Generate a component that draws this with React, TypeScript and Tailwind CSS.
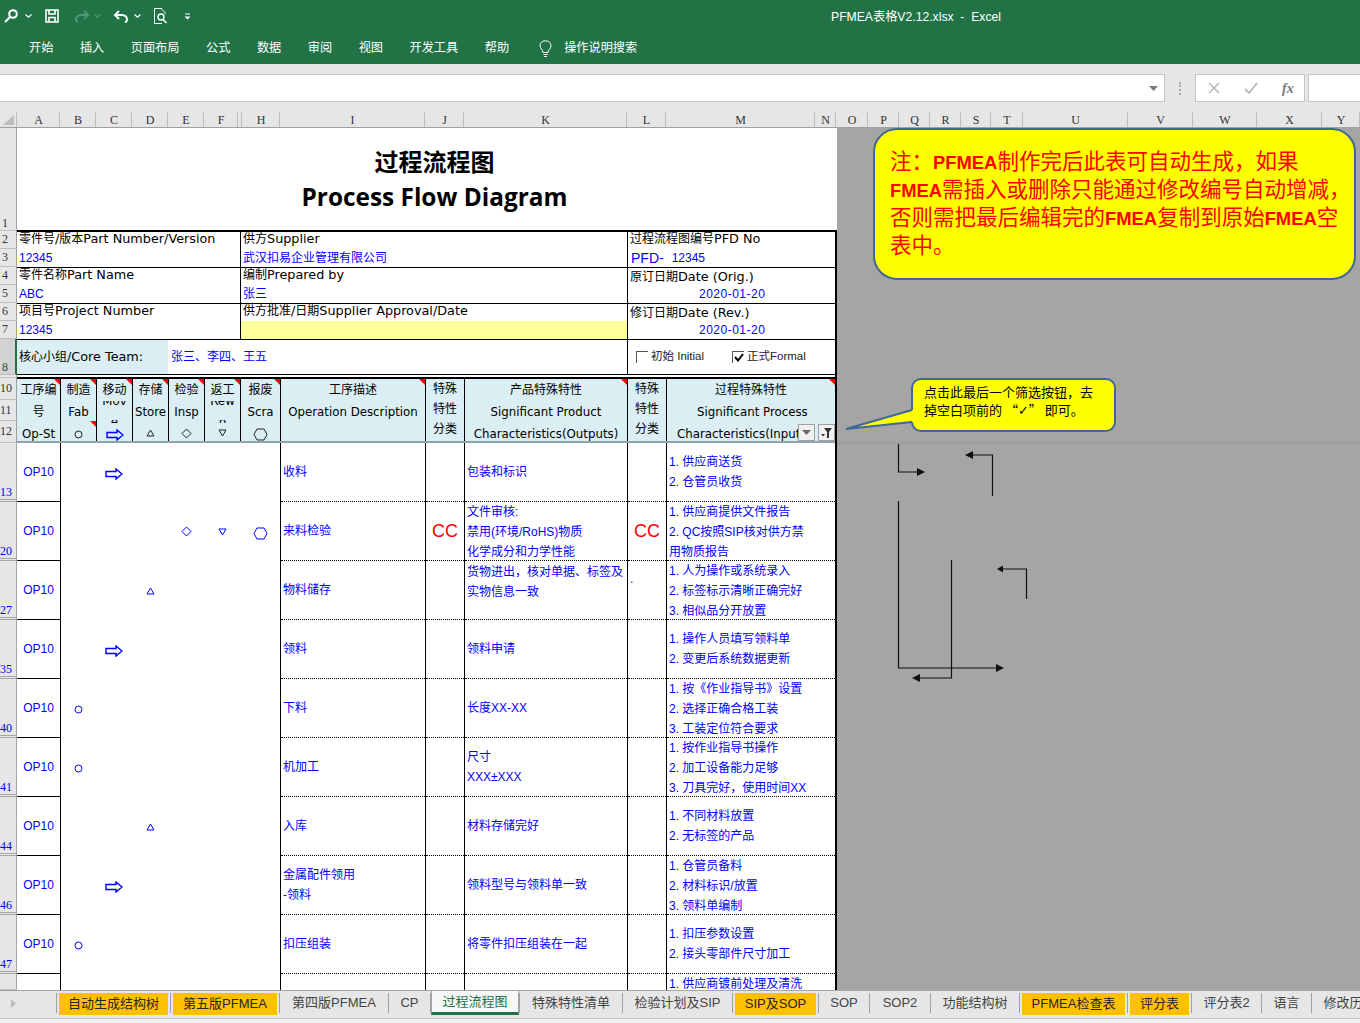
import React from 'react';

const sans = "font-['DejaVu_Sans','Noto_Sans_CJK_SC',sans-serif] text-[12.8px] text-black";
const head = "font-['DejaVu_Sans','Noto_Sans_CJK_SC',sans-serif] text-[11.8px] text-black";
const blueFont = "font-['Liberation_Sans','Noto_Sans_CJK_SC',sans-serif] text-[12px] text-[#0000ff]";
const blue = `${blueFont} leading-[20px]`;
const cols = 'grid grid-cols-[43px_36px_36px_36px_36px_36px_40px_145px_39px_163px_39px_169px]';

// CJK glyphs are a touch smaller than the latin ones in these cells
function Mix({ text }: { text: string }) {
  return (
    <>
      {text.split(/([\u3000-\u9fff\uff00-\uffef]+)/).map((part, i) =>
        i % 2 ? (
          <span key={i} className="text-[12px]">
            {part}
          </span>
        ) : (
          part
        )
      )}
    </>
  );
}

function Mark({ type, color = '#0000ff' }: { type?: string; color?: string }) {
  if (type === 'arrow')
    return (
      <svg width="18" height="12" viewBox="0 0 18 12" className="mt-[3px]" fill="none" stroke={color} strokeWidth="1.4">
        <path d="M1 3.5H11V1L17 6L11 11V8.5H1Z" />
      </svg>
    );
  if (type === 'circle')
    return (
      <svg width="9" height="9" viewBox="0 0 9 9" className="mt-[2px]" fill="none" stroke={color}>
        <circle cx="4.5" cy="4.5" r="3.5" />
      </svg>
    );
  if (type === 'up')
    return (
      <svg width="9" height="8" viewBox="0 0 9 8" fill="none" stroke={color}>
        <path d="M4.5 1L8 7H1Z" />
      </svg>
    );
  if (type === 'down')
    return (
      <svg width="9" height="8" viewBox="0 0 9 8" fill="none" stroke={color}>
        <path d="M1 1H8L4.5 7Z" />
      </svg>
    );
  if (type === 'diamond')
    return (
      <svg width="11" height="11" viewBox="0 0 11 11" fill="none" stroke={color}>
        <path d="M5.5 1L10 5.5L5.5 10L1 5.5Z" />
      </svg>
    );
  if (type === 'hex')
    return (
      <svg width="15" height="13" viewBox="0 0 15 13" className="mt-[3px]" fill="none" stroke={color}>
        <path d="M4 1H11L14 6.5L11 12H4L1 6.5Z" />
      </svg>
    );
  return null;
}

function Corner({ className = 'top-0' }: { className?: string }) {
  return (
    <span className={`absolute right-0 h-0 w-0 border-l-[6px] border-t-[6px] border-l-transparent border-t-[#ff0000] ${className}`} />
  );
}

const columns = [
  { label: '', w: 'w-[17px]' },
  { label: 'A', w: 'w-[43px]' },
  { label: 'B', w: 'w-[36px]' },
  { label: 'C', w: 'w-[36px]' },
  { label: 'D', w: 'w-[36px]' },
  { label: 'E', w: 'w-[36px]' },
  { label: 'F', w: 'w-[34px]' },
  { label: '', w: 'w-[4px]' },
  { label: 'H', w: 'w-[38px]' },
  { label: 'I', w: 'w-[145px]' },
  { label: 'J', w: 'w-[39px]' },
  { label: 'K', w: 'w-[163px]' },
  { label: 'L', w: 'w-[39px]' },
  { label: 'M', w: 'w-[149px]' },
  { label: 'N', w: 'w-[21px]' },
  { label: 'O', w: 'w-[32px]' },
  { label: 'P', w: 'w-[31px]' },
  { label: 'Q', w: 'w-[31px]' },
  { label: 'R', w: 'w-[31px]' },
  { label: 'S', w: 'w-[30px]' },
  { label: 'T', w: 'w-[32px]' },
  { label: 'U', w: 'w-[105px]' },
  { label: 'V', w: 'w-[65px]' },
  { label: 'W', w: 'w-[64px]' },
  { label: 'X', w: 'w-[65px]' },
  { label: 'Y', w: 'w-[38px]' },
];

const rowHeads = [
  { n: '1', h: 'h-[103px]', end: true },
  { n: '2', h: 'h-[18px]' },
  { n: '3', h: 'h-[18px]' },
  { n: '4', h: 'h-[18px]' },
  { n: '5', h: 'h-[18px]' },
  { n: '6', h: 'h-[18px]' },
  { n: '7', h: 'h-[18px]' },
  { n: '8', h: 'h-[36px]', end: true, selected: true },
  { n: '', h: 'h-[3px]' },
  { n: '10', h: 'h-[22px]' },
  { n: '11', h: 'h-[21px]' },
  { n: '12', h: 'h-[22px]' },
  { n: '13', h: 'h-[59px]', end: true, filtered: true },
  { n: '20', h: 'h-[59px]', end: true, filtered: true },
  { n: '27', h: 'h-[59px]', end: true, filtered: true },
  { n: '35', h: 'h-[59px]', end: true, filtered: true },
  { n: '40', h: 'h-[59px]', end: true, filtered: true },
  { n: '41', h: 'h-[59px]', end: true, filtered: true },
  { n: '44', h: 'h-[59px]', end: true, filtered: true },
  { n: '46', h: 'h-[59px]', end: true, filtered: true },
  { n: '47', h: 'h-[59px]', end: true, filtered: true },
  { n: '', h: 'h-[16px]' },
];

const steps = [
  { marks: ['', 'arrow', '', '', '', ''], name: ['收料'], product: ['包装和标识'], cc: false, process: ['1. 供应商送货', '2. 仓管员收货'] },
  {
    marks: ['', '', '', 'diamond', 'down', 'hex'],
    name: ['来料检验'],
    product: ['文件审核:', '禁用(环境/RoHS)物质', '化学成分和力学性能'],
    cc: true,
    process: ['1. 供应商提供文件报告', '2. QC按照SIP核对供方禁', '用物质报告'],
  },
  {
    marks: ['', '', 'up', '', '', ''],
    name: ['物料储存'],
    product: ['货物进出，核对单据、标签及', '实物信息一致'],
    top: true,
    dot: true,
    cc: false,
    process: ['1. 人为操作或系统录入', '2. 标签标示清晰正确完好', '3. 相似品分开放置'],
  },
  { marks: ['', 'arrow', '', '', '', ''], name: ['领料'], product: ['领料申请'], cc: false, process: ['1. 操作人员填写领料单', '2. 变更后系统数据更新'] },
  {
    marks: ['circle', '', '', '', '', ''],
    name: ['下料'],
    product: ['长度XX-XX'],
    cc: false,
    process: ['1. 按《作业指导书》设置', '2. 选择正确合格工装', '3. 工装定位符合要求'],
  },
  {
    marks: ['circle', '', '', '', '', ''],
    name: ['机加工'],
    product: ['尺寸', 'XXX±XXX'],
    cc: false,
    process: ['1. 按作业指导书操作', '2. 加工设备能力足够', '3. 刀具完好，使用时间XX'],
  },
  { marks: ['', '', 'up', '', '', ''], name: ['入库'], product: ['材料存储完好'], cc: false, process: ['1. 不同材料放置', '2. 无标签的产品'] },
  {
    marks: ['', 'arrow', '', '', '', ''],
    name: ['金属配件领用', '-领料'],
    product: ['领料型号与领料单一致'],
    cc: false,
    process: ['1. 仓管员备料', '2. 材料标识/放置', '3. 领料单编制'],
  },
  { marks: ['circle', '', '', '', '', ''], name: ['扣压组装'], product: ['将零件扣压组装在一起'], cc: false, process: ['1. 扣压参数设置', '2. 接头零部件尺寸加工'] },
];

const sheetTabs = [
  { name: '自动生成结构树', w: 'w-[114px]', hot: true },
  { name: '第五版PFMEA', w: 'w-[109px]', hot: true },
  { name: '第四版PFMEA', w: 'w-[109px]' },
  { name: 'CP', w: 'w-[42px]' },
  { name: '过程流程图', w: 'w-[89px]', active: true },
  { name: '特殊特性清单', w: 'w-[103px]' },
  { name: '检验计划及SIP', w: 'w-[110px]' },
  { name: 'SIP及SOP', w: 'w-[86px]', hot: true },
  { name: 'SOP', w: 'w-[51px]' },
  { name: 'SOP2', w: 'w-[61px]' },
  { name: '功能结构树', w: 'w-[89px]' },
  { name: 'PFMEA检查表', w: 'w-[108px]', hot: true },
  { name: '评分表', w: 'w-[64px]', hot: true },
  { name: '评分表2', w: 'w-[70px]' },
  { name: '语言', w: 'w-[50px]' },
  { name: '修改历史', w: 'w-[76px]' },
];

function Chevron({ className = '' }: { className?: string }) {
  return (
    <svg width="7" height="4" viewBox="0 0 7 4" fill="none" stroke="currentColor" strokeWidth="1.2" className={className}>
      <path d="M0.5 0.5L3.5 3.2L6.5 0.5" />
    </svg>
  );
}

function QuickAccess() {
  return (
    <div className="flex w-[831px] shrink-0 items-center pl-[4px] text-white">
      <svg width="14" height="14" viewBox="0 0 14 14" fill="none" stroke="currentColor" strokeWidth="2">
        <circle cx="9" cy="5" r="3.8" />
        <path d="M6 8L1 13" />
      </svg>
      <Chevron className="ml-[7px]" />
      <svg width="14" height="14" viewBox="0 0 14 14" className="ml-[13px]" fill="none" stroke="currentColor" strokeWidth="1.6">
        <path d="M1 1H13V13H1Z" />
        <path d="M4 1V5H10V1M4 13V8.5H10V13" />
      </svg>
      <svg width="16" height="14" viewBox="0 0 16 14" className="ml-[15px] text-[#4f9a72]" fill="none" stroke="currentColor" strokeWidth="2">
        <path d="M10 2L14 6L10 10M14 6H7C4 6 2 8 2 10.5C2 12 3 13 4 13.5" />
      </svg>
      <Chevron className="ml-[4px] text-[#4f9a72]" />
      <svg width="16" height="14" viewBox="0 0 16 14" className="ml-[12px]" fill="none" stroke="currentColor" strokeWidth="2">
        <path d="M6 2L2 6L6 10M2 6H9C12 6 14 8 14 10.5C14 12 13 13 12 13.5" />
      </svg>
      <Chevron className="ml-[5px]" />
      <svg width="15" height="16" viewBox="0 0 15 16" className="ml-[12px]" fill="none" stroke="currentColor">
        <path d="M9 0.5H1.5V15.5H9" />
        <path d="M8 0.5L12 4.5V6" />
        <circle cx="8" cy="9" r="3" strokeWidth="1.4" />
        <path d="M10 11.5L13.5 15" strokeWidth="1.6" />
      </svg>
      <svg width="7" height="7" viewBox="0 0 7 7" className="ml-[16px]" fill="currentColor">
        <path d="M1 0.5H6V1.5H1ZM0.5 3.5H6.5L3.5 6.5Z" />
      </svg>
    </div>
  );
}

function Chrome() {
  const tabs = ['开始', '插入', '页面布局', '公式', '数据', '审阅', '视图', '开发工具', '帮助'];
  return (
    <div className="h-[64px] bg-[#217346] font-['Liberation_Sans','Noto_Sans_CJK_SC',sans-serif] text-[12.2px] text-white">
      <div className="flex h-[32px] items-center">
        <QuickAccess />
        <span className="whitespace-pre pt-[2px]">PFMEA表格V2.12.xlsx  -  Excel</span>
      </div>
      <div className="flex h-[32px] items-center pl-[29px]">
        <div className="flex gap-[26.5px]">
          {tabs.map((t) => (
            <span key={t}>{t}</span>
          ))}
        </div>
        <svg width="13" height="17" viewBox="0 0 13 17" className="ml-[30px]" fill="none" stroke="currentColor">
          <path d="M4 12.5C4 10 1 8.5 1 5.5C1 2.8 3.2 0.8 6.5 0.8C9.8 0.8 12 2.8 12 5.5C12 8.5 9 10 9 12.5Z" />
          <path d="M4.5 14.5H8.5M5 16.5H8" />
        </svg>
        <span className="ml-[12px]">操作说明搜索</span>
      </div>
    </div>
  );
}

function FormulaBar() {
  return (
    <div className="flex h-[39px] items-start bg-[#e6e6e6] pt-[10px]">
      <div className="flex h-[28px] w-[1165px] items-center justify-end border-y border-r border-[#c6c6c6] bg-white pr-[6px]">
        <svg width="9" height="5" viewBox="0 0 9 5" fill="#7a7a7a">
          <path d="M0 0H9L4.5 5Z" />
        </svg>
      </div>
      <div className="flex h-[28px] w-[30px] items-center justify-center">
        <div className="h-[13px] border-l-2 border-dotted border-[#a8a8a8]" />
      </div>
      <div className="flex h-[28px] w-[110px] items-center gap-[24px] border border-[#c6c6c6] bg-white pl-[12px] text-[#b5b5b5]">
        <svg width="12" height="12" viewBox="0 0 12 12" fill="none" stroke="currentColor" strokeWidth="1.5">
          <path d="M1 1L11 11M11 1L1 11" />
        </svg>
        <svg width="14" height="12" viewBox="0 0 14 12" fill="none" stroke="currentColor" strokeWidth="1.8">
          <path d="M1 7L5 11L13 1" />
        </svg>
        <span className="font-['Liberation_Serif',serif] text-[14px] font-bold italic text-[#7a7a7a]">fx</span>
      </div>
      <div className="ml-[3px] h-[28px] flex-1 border-y border-l border-[#c6c6c6] bg-white" />
    </div>
  );
}

function ColumnHeaders() {
  return (
    <div className="flex h-[25px] items-end overflow-hidden border-b border-[#a0a0a0] bg-[#e6e6e6] font-['Liberation_Serif',serif] text-[12px] text-[#333]">
      {columns.map((c, i) => (
        <div key={i} className={`${c.w} flex h-[15px] shrink-0 items-center justify-center border-r border-[#bdbdbd] pl-px`}>
          {i === 0 ? (
            <svg width="11" height="10" viewBox="0 0 11 10" fill="#bdbdbd">
              <path d="M11 0V10H0Z" />
            </svg>
          ) : (
            c.label
          )}
        </div>
      ))}
    </div>
  );
}

function RowHeaders() {
  return (
    <div className="w-[17px] shrink-0 bg-[#e6e6e6] font-['Liberation_Serif',serif] text-[12px] leading-[13px]">
      {rowHeads.map((r, i) => (
        <div
          key={i}
          className={`${r.h} flex overflow-hidden border-b ${r.end ? 'items-end' : 'items-center'} ${
            r.selected
              ? 'border-r-2 border-b-[#bdbdbd] border-r-[#217346] bg-[#d2d2d2] text-[#1f5c38]'
              : r.filtered
                ? 'border-r border-b-[3px] border-double border-[#a6a6a6] text-[#0000ff]'
                : 'border-r border-[#bdbdbd] border-r-[#a0a0a0] text-[#333]'
          }`}
        >
          <span className={r.n.length > 1 ? 'pl-0' : 'pl-[2px]'}>{r.n}</span>
        </div>
      ))}
    </div>
  );
}

function InfoBlock({ label, value, fill }: { label: string; value: string; fill?: boolean }) {
  return (
    <div className="flex h-full flex-col">
      <div className={`h-[17px] whitespace-nowrap pl-[2px] leading-[13px] ${sans}`}>
        <Mix text={label} />
      </div>
      <div className={`h-[18px] pl-[2px] leading-[18px] ${blueFont} ${fill ? 'bg-[#ffff99]' : ''}`}>{value}</div>
    </div>
  );
}

function DateBlock({ label, value }: { label: string; value: string }) {
  return (
    <div className="flex h-full flex-col">
      <div className={`h-[17px] whitespace-nowrap pl-[2px] leading-[17px] ${sans}`}>
        <Mix text={label} />
      </div>
      <div className={`h-[18px] pl-[71px] leading-[19px] tracking-[0.5px] ${blueFont}`}>{value}</div>
    </div>
  );
}

function HeadCell({ lines, tight, clip, mark, corner, extra }: { lines?: string[]; tight?: boolean; clip?: [string, string]; mark?: string; corner?: boolean; extra?: boolean }) {
  return (
    <div className={`relative flex flex-col items-center overflow-hidden whitespace-nowrap border-l border-black first:border-l-0 ${head} ${tight ? 'leading-[20px]' : 'leading-[22px]'}`}>
      {corner && <Corner />}
      {extra && <Corner className="top-[42px]" />}
      {lines?.map((l) => (
        <div key={l}>
          <Mix text={l} />
        </div>
      ))}
      {clip && (
        <>
          <div className="h-[6px] overflow-hidden leading-[13px]">
            <div className="-mt-[6px]">{clip[0]}</div>
          </div>
          <div className="mt-[13px] h-[3px] overflow-hidden leading-[13px]">
            <div className="-mt-[4px]">{clip[1]}</div>
          </div>
        </>
      )}
      {mark && (
        <div className="mt-[3px] flex h-[14px] items-center">
          <Mark type={mark} color={mark === 'arrow' ? '#0000ff' : '#222222'} />
        </div>
      )}
    </div>
  );
}

// three 20px lines don't quite fit a 59px row, nudge them down
function Lines({ lines, top }: { lines: string[]; top?: boolean }) {
  const align = top ? 'justify-start pt-[1px]' : lines.length === 3 ? 'justify-center pt-[2px]' : 'justify-center';
  return (
    <div className={`flex h-full flex-col whitespace-nowrap border-b border-dotted border-black pl-[2px] ${align} ${blue}`}>
      {lines.map((l) => (
        <div key={l}>{l}</div>
      ))}
    </div>
  );
}

function StepRow({ step }: { step: (typeof steps)[number] }) {
  return (
    <div className={`${cols} h-[59px] grid-rows-[59px]`}>
      <div className={`flex items-center justify-center border-b border-black ${blue}`}>OP10</div>
      {step.marks.map((m, i) => (
        <div key={i} className={`flex items-center justify-center ${i === 0 ? 'border-l border-black' : ''}`}>
          <Mark type={m} />
        </div>
      ))}
      <div className="border-l border-black">
        <Lines lines={step.name} />
      </div>
      <div className="border-l border-black">
        <div className="flex h-full items-center justify-center border-b border-dotted border-black font-['Liberation_Sans',sans-serif] text-[18px] text-[#ff0000]">
          {step.cc ? 'CC' : ''}
        </div>
      </div>
      <div className="border-l border-black">
        <Lines lines={step.product} top={step.top} />
      </div>
      <div className="border-l border-black">
        <div className="flex h-full items-center justify-center border-b border-dotted border-black font-['Liberation_Sans',sans-serif] text-[18px] text-[#ff0000]">
          {step.cc ? 'CC' : ''}
          {step.dot && <span className={`-mt-[22px] mr-auto pl-[2px] ${blue}`}>.</span>}
        </div>
      </div>
      <div className="border-l border-black">
        <Lines lines={step.process} />
      </div>
    </div>
  );
}

function Sheet() {
  return (
    <div className="w-[820px] shrink-0 bg-white">
      <div className="h-[102px] pl-[15px] pt-[17px] text-center font-['Open_Sans','Noto_Sans_CJK_SC',sans-serif] text-[24px] font-bold leading-[34px] text-black">
        <div>过程流程图</div>
        <div className="mt-[1px] text-[24.4px]">Process Flow Diagram</div>
      </div>
      <div className="border-r-2 border-t-2 border-black">
        <div className="grid h-[36px] grid-cols-[223px_387px_208px] border-b border-black">
          <InfoBlock label="零件号/版本Part Number/Version" value="12345" />
          <div className="border-l border-black">
            <InfoBlock label="供方Supplier" value="武汉扣易企业管理有限公司" />
          </div>
          <div className="border-l border-black">
            <div className={`h-[17px] pl-[2px] leading-[13px] ${sans}`}>
              <Mix text="过程流程图编号PFD No" />
            </div>
            <div className={`flex h-[18px] items-center gap-[8px] pl-[3px] leading-[16px] ${blueFont}`}>
              <span className="text-[14px]">PFD-</span>
              <span>12345</span>
            </div>
          </div>
        </div>
        <div className="grid h-[36px] grid-cols-[223px_387px_208px] border-b border-black">
          <InfoBlock label="零件名称Part Name" value="ABC" />
          <div className="border-l border-black">
            <InfoBlock label="编制Prepared by" value="张三" />
          </div>
          <div className="border-l border-black">
            <DateBlock label="原订日期Date (Orig.)" value="2020-01-20" />
          </div>
        </div>
        <div className="grid h-[36px] grid-cols-[223px_387px_208px] border-b border-black">
          <InfoBlock label="项目号Project Number" value="12345" />
          <div className="border-l border-black">
            <InfoBlock label="供方批准/日期Supplier Approval/Date" value="" fill />
          </div>
          <div className="border-l border-black">
            <DateBlock label="修订日期Date (Rev.)" value="2020-01-20" />
          </div>
        </div>
        <div className="grid h-[35px] grid-cols-[151px_459px_208px] border-b border-black">
          <div className={`flex items-center bg-[#daeef3] pl-[2px] ${sans}`}>
            <Mix text="核心小组/Core Team:" />
          </div>
          <div className={`flex items-center pl-[3px] ${blue}`}>张三、李四、王五</div>
          <div className="flex items-center border-l border-black pl-[8px] font-['Liberation_Sans','Noto_Sans_CJK_SC',sans-serif] text-[11.5px] text-[#222]">
            <div className="h-[12px] w-[12px] border-l border-t border-[#555] bg-white" />
            <span className="ml-[3px] w-[81px]">初始 Initial</span>
            <div className="flex h-[12px] w-[12px] items-center justify-center border-l border-t border-[#555]">
              <svg width="10" height="9" viewBox="0 0 10 9" fill="none" stroke="#000" strokeWidth="2">
                <path d="M1 4L4 7.5L9 1" />
              </svg>
            </div>
            <span className="ml-[3px]">正式Formal</span>
          </div>
        </div>
        <div className="h-[2px]" />
        <div className={`${cols} relative h-[66px] border-b-2 border-t-2 border-b-[#92a5ad] border-t-black bg-[#daeef3]`}>
          <HeadCell lines={['工序编', '号', 'Op-St']} corner />
          <HeadCell lines={['制造', 'Fab']} mark="circle" corner extra />
          <HeadCell lines={['移动']} clip={['Mov', 'e']} mark="arrow" corner />
          <HeadCell lines={['存储', 'Store']} mark="up" corner />
          <HeadCell lines={['检验', 'Insp']} mark="diamond" corner />
          <HeadCell lines={['返工']} clip={['Rew', 'o']} mark="down" corner />
          <HeadCell lines={['报废', 'Scra']} mark="hex" corner />
          <HeadCell lines={['工序描述', 'Operation Description']} corner />
          <HeadCell lines={['特殊', '特性', '分类']} tight />
          <HeadCell lines={['产品特殊特性', 'Significant Product', 'Characteristics(Outputs)']} corner />
          <HeadCell lines={['特殊', '特性', '分类']} tight />
          <div className={`relative overflow-hidden whitespace-nowrap border-l border-black pl-[10px] leading-[22px] ${head}`}>
            <Corner />
            <div className="pl-[38px]">
              <Mix text="过程特殊特性" />
            </div>
            <div className="pl-[20px]">Significant Process</div>
            <div>Characteristics(Inputs)</div>
            <div className="absolute bottom-0 right-[20px] flex h-[17px] w-[17px] items-center justify-center border border-[#a0a0a0] bg-[#f0f0f0]">
              <svg width="9" height="5" viewBox="0 0 9 5" fill="#666">
                <path d="M0 0H9L4.5 5Z" />
              </svg>
            </div>
            <div className="absolute bottom-0 right-0 flex h-[17px] w-[17px] items-center justify-center border border-[#a0a0a0] bg-[#f0f0f0]">
              <svg width="11" height="10" viewBox="0 0 11 10" fill="#333">
                <path d="M3 0H11L8 4V10H6V4Z" />
                <path d="M0 6H4L2 8.5Z" />
              </svg>
            </div>
          </div>
        </div>
        {steps.map((s, i) => (
          <StepRow key={i} step={s} />
        ))}
        <div className={`${cols} h-[16px] overflow-hidden`}>
          <div />
          <div className="col-span-6 border-l border-black" />
          <div className="border-l border-black" />
          <div className="border-l border-black" />
          <div className="border-l border-black" />
          <div className="border-l border-black" />
          <div className={`whitespace-nowrap border-l border-black pl-[2px] ${blue}`}>1. 供应商镀前处理及清洗</div>
        </div>
      </div>
    </div>
  );
}

function Notes() {
  const bold = "font-['Liberation_Sans',sans-serif] text-[18.4px] font-bold leading-[0px]";
  return (
    <div className="relative h-full flex-1 overflow-hidden bg-[#a5a5a5]">
      <div className="absolute left-[36px] top-0 h-[152px] w-[483px] rounded-[24px] border-2 border-[#3f6797] bg-[#ffff00] pl-[15px] pt-[16px] font-['Noto_Sans_CJK_SC',sans-serif] text-[21.5px] leading-[28px] text-[#ff0000]">
        <div className="whitespace-nowrap">
          注：<span className={bold}>PFMEA</span>制作完后此表可自动生成，如果
        </div>
        <div className="whitespace-nowrap">
          <span className={bold}>FMEA</span>需插入或删除只能通过修改编号自动增减，
        </div>
        <div className="whitespace-nowrap">
          否则需把最后编辑完的<span className={bold}>FMEA</span>复制到原始<span className={bold}>FMEA</span>空
        </div>
        <div className="whitespace-nowrap">表中。</div>
      </div>
      <div className="absolute left-[74px] top-[250px] h-[54px] w-[205px] rounded-[10px] border-2 border-[#3f6797] bg-[#ffff00] pl-[11px] pt-[3px] font-['Noto_Sans_CJK_SC',sans-serif] text-[13px] leading-[18px] text-black">
        <div className="whitespace-nowrap">点击此最后一个筛选按钮，去</div>
        <div className="whitespace-nowrap">
          掉空白项前的 “<span className="font-['DejaVu_Sans',sans-serif] font-bold leading-[0px]">✓</span>” 即可。
        </div>
      </div>
      <svg className="absolute inset-0 h-full w-full" viewBox="837 128 523 862" fill="none">
        <path d="M846 429L913 410V422Z" fill="#ffff00" />
        <path d="M912 410L846 429L912 422" stroke="#3f6797" strokeWidth="2" />
        <path d="M837 443H1360" stroke="#939393" />
        <g stroke="#111111" strokeWidth="1.2">
          <path d="M898.5 444V472H918" />
          <path d="M992.5 496V455H972" />
          <path d="M898.5 501V668H998" />
          <path d="M951.5 560V678H918" />
          <path d="M1026.5 599V569H1002" />
        </g>
        <g fill="#111111">
          <path d="M925 472L917 468V476Z" />
          <path d="M965 455L973 451V459Z" />
          <path d="M1004 668L996 664V672Z" />
          <path d="M912 678L920 674V682Z" />
          <path d="M997 569L1003 565.5V572.5Z" />
        </g>
      </svg>
    </div>
  );
}

function SheetTabs() {
  return (
    <div className="h-[28px] border-t border-[#a6a6a6] bg-[#e6e6e6] font-['Liberation_Sans','Noto_Sans_CJK_SC',sans-serif] text-[13px]">
      <div className="relative flex h-[24px] items-stretch overflow-hidden whitespace-nowrap pl-[56px]">
        <svg width="5" height="9" viewBox="0 0 5 9" fill="#bdbdbd" className="absolute left-[11px] top-[8px]">
          <path d="M0 0L5 4.5L0 9Z" />
        </svg>
        {sheetTabs.map((t) => (
          <div key={t.name} className={`${t.w} flex shrink-0 items-center`}>
            <div className="h-[20px] w-px shrink-0 bg-[#a0a0a0]" />
            {t.active ? (
              <div className="flex h-full flex-1 items-center justify-center border-x border-[#a6a6a6] border-b-[3px] border-b-[#217346] bg-[#f7f7f7] text-[#217346]">
                {t.name}
              </div>
            ) : t.hot ? (
              <div className="mx-[2px] flex h-[22px] flex-1 items-center justify-center self-end bg-[#ffc000] text-[#262626]">{t.name}</div>
            ) : (
              <div className="flex flex-1 items-center justify-center text-[#444]">{t.name}</div>
            )}
          </div>
        ))}
      </div>
    </div>
  );
}

export default function App() {
  return (
    <div className="flex h-[1023px] w-[1360px] flex-col overflow-hidden bg-[#e6e6e6]">
      <Chrome />
      <FormulaBar />
      <ColumnHeaders />
      <div className="flex h-[862px] overflow-hidden">
        <RowHeaders />
        <Sheet />
        <Notes />
      </div>
      <SheetTabs />
      <div className="h-[5px] border-t border-[#c6c6c6] bg-[#f0f0f0]" />
    </div>
  );
}
